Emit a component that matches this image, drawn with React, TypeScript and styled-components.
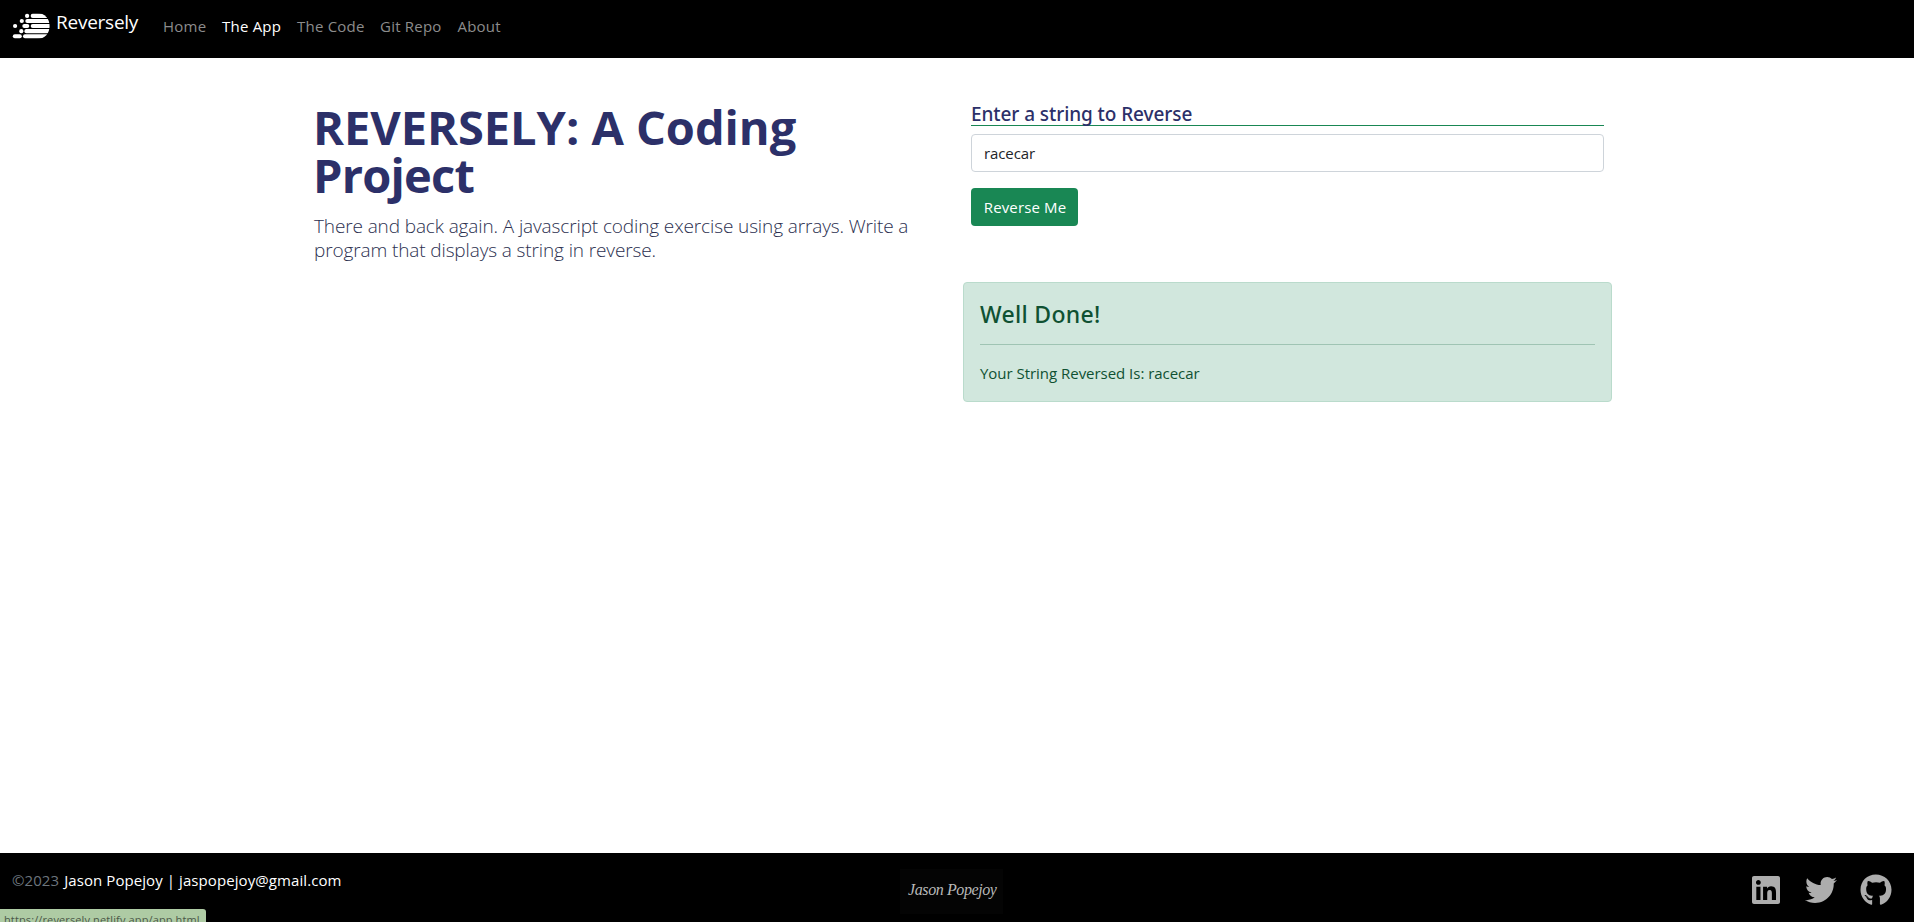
import React from "react";
import styled, { createGlobalStyle } from "styled-components";
import { FaGithub, FaLinkedin, FaTwitter } from "react-icons/fa";

const GlobalStyle = createGlobalStyle`
  *, *::before, *::after { box-sizing: border-box; }
  body {
    margin: 0;
    background: #fff;
    color: #212529;
    font-family: "Open Sans", "Noto Sans", sans-serif;
    font-size: 15px;
    line-height: 24px;
  }
  h1, h4, p, ul { margin: 0; padding: 0; }
`;

const Page = styled.div`
  display: flex;
  flex-direction: column;
  height: 922px;
  overflow: hidden;
  position: relative;
`;

const Navbar = styled.nav`
  display: flex;
  align-items: flex-start;
  height: 58px;
  padding-left: 12px;
  background: #000;
  flex: none;
`;

const Brand = styled.a`
  display: flex;
  gap: 6px;
  width: 151px;
  color: #fff;
  font-size: 19px;
  letter-spacing: -0.25px;
  line-height: 30px;
  padding-top: 8px;
`;

const LogoMark = styled.svg`
  width: 38px;
  height: 26px;
  margin-top: 5px;
  flex: none;
`;

const BrandName = styled.span`
  margin-top: -1px;
`;

const NavList = styled.ul`
  display: flex;
  list-style: none;
  padding-top: 14px;
`;

const NavItem = styled.li<{ $width: number; $active?: boolean }>`
  width: ${(p) => p.$width}px;
  color: ${(p) => (p.$active ? "#fff" : "#8c8c8c")};
  letter-spacing: 0.22px;
  white-space: nowrap;
`;

const Main = styled.main`
  flex: 1;
  display: grid;
  grid-template-columns: 649px 649px;
  align-content: start;
  justify-content: start;
  padding: 43px 0 0 314px;
`;

const Intro = styled.section`
  padding-top: 2px;
`;

const Title = styled.h1`
  color: #2c3069;
  font-size: 47px;
  font-weight: 700;
  line-height: 48px;
  margin-left: -1px;
`;

const TitleLine = styled.span<{ $spacing: number }>`
  display: block;
  letter-spacing: ${(p) => p.$spacing}px;
`;

const Lead = styled.p`
  width: 620px;
  margin-top: 15px;
  color: #2c3050;
  font-size: 19px;
  font-weight: 300;
  letter-spacing: -0.12px;
  line-height: 24px;
`;

const Form = styled.form`
  display: flex;
  flex-direction: column;
  align-items: flex-start;
  padding: 0 8px;
`;

const Label = styled.label`
  width: 100%;
  height: 25px;
  border-bottom: 1px solid #198754;
  color: #2c3069;
  font-family: "Noto Sans", sans-serif;
  font-size: 19px;
  font-weight: 500;
  letter-spacing: -0.08px;
  line-height: 26px;
`;

const TextInput = styled.input`
  width: 100%;
  height: 38px;
  margin: 8px 0 16px;
  padding: 6px 12px;
  border: 1px solid #ced4da;
  border-radius: 4px;
  background: #fff;
  color: #212529;
  font: inherit;
  letter-spacing: -0.1px;
  outline: none;
`;

const SubmitButton = styled.button`
  width: 107px;
  height: 38px;
  padding: 0 0 1px 1px;
  border: 0;
  border-radius: 4px;
  background: #198754;
  color: #fff;
  font: inherit;
  letter-spacing: 0.13px;
`;

const Alert = styled.div`
  height: 120px;
  margin-top: 56px;
  padding: 16px;
  border: 1px solid #badbcc;
  border-radius: 4px;
  background: #d1e7dd;
  color: #0f5132;
`;

const AlertHeading = styled.h4`
  font-family: "Noto Sans", sans-serif;
  font-size: 23px;
  font-weight: 500;
  letter-spacing: 0.3px;
  line-height: 30px;
`;

const Divider = styled.div`
  height: 1px;
  margin: 15px 0 16px;
  background: #9fc4b3;
`;

const AlertText = styled.p`
  letter-spacing: -0.03px;
`;

const Footer = styled.footer`
  display: grid;
  grid-template-columns: 1fr 102px 1fr;
  align-items: start;
  height: 69px;
  padding: 16px 22px 0 12px;
  background: #000;
  flex: none;
`;

const Copyright = styled.p`
  margin-top: -1px;
  color: #6c757d;
  letter-spacing: 0.08px;
`;

const Owner = styled.span`
  margin-left: 1px;
  color: #fff;
`;

const Signature = styled.div`
  height: 45px;
  margin-left: -1px;
  padding-left: 8px;
  background: #040404;
  color: #b8b8b8;
  font-family: "Liberation Serif", serif;
  font-size: 16px;
  font-style: italic;
  letter-spacing: -0.4px;
  line-height: 41px;
  white-space: nowrap;
`;

const Socials = styled.div`
  display: flex;
  justify-content: flex-end;
  gap: 23px;
  padding-top: 5px;
  color: #adadad;
  font-size: 32px;
`;

const StatusBar = styled.div`
  position: absolute;
  left: 0;
  bottom: 0;
  width: 206px;
  height: 13px;
  padding: 2px 0 0 4px;
  border-top-right-radius: 3px;
  background: #aecba4;
  color: #4b5848;
  font-size: 11px;
  letter-spacing: 0.12px;
  line-height: 17px;
  overflow: hidden;
  white-space: nowrap;
`;

/* Each entry is one rounded stripe of the mark: x, y, width. */
const stripes: [number, number, number][] = [
  [13, 0.8, 4.2], [18.7, 0.8, 22],
  [7.7, 5.9, 4.2], [13.3, 5.9, 28],
  [1, 11, 4.2], [10.3, 11, 7], [18.7, 11, 24],
  [7.2, 16.1, 4.2], [12.4, 16.1, 28],
  [0.8, 21.2, 9], [11, 21.2, 28],
];

const Logo = () => (
  <LogoMark viewBox="0 0 38 26">
    <clipPath id="mark">
      <path d="M0 0H25C33 0 37.6 6 37.6 13S33 26 25 26H0Z" />
    </clipPath>
    <g clipPath="url(#mark)" fill="#fff">
      {stripes.map(([x, y, w]) => (
        <rect key={`${x}-${y}`} x={x} y={y} width={w} height={4.1} rx={2} />
      ))}
    </g>
  </LogoMark>
);

const links = [
  { label: "Home", width: 59 },
  { label: "The App", width: 75, active: true },
  { label: "The Code", width: 83 },
  { label: "Git Repo", width: 77.5 },
  { label: "About", width: 60 },
];

export default function App() {
  return (
    <Page>
      <GlobalStyle />
      <Navbar>
        <Brand>
          <Logo />
          <BrandName>Reversely</BrandName>
        </Brand>
        <NavList>
          {links.map((l) => (
            <NavItem key={l.label} $width={l.width} $active={l.active}>
              {l.label}
            </NavItem>
          ))}
        </NavList>
      </Navbar>
      <Main>
        <Intro>
          <Title>
            <TitleLine $spacing={-0.05}>REVERSELY: A Coding</TitleLine>
            <TitleLine $spacing={-0.8}>Project</TitleLine>
          </Title>
          <Lead>
            There and back again. A javascript coding exercise using arrays. Write a
            program that displays a string in reverse.
          </Lead>
        </Intro>
        <section>
          <Form>
            <Label htmlFor="source">Enter a string to Reverse</Label>
            <TextInput id="source" defaultValue="racecar" />
            <SubmitButton type="button">Reverse Me</SubmitButton>
          </Form>
          <Alert>
            <AlertHeading>Well Done!</AlertHeading>
            <Divider />
            <AlertText>Your String Reversed Is: racecar</AlertText>
          </Alert>
        </section>
      </Main>
      <Footer>
        <Copyright>
          ©2023 <Owner>Jason Popejoy | jaspopejoy@gmail.com</Owner>
        </Copyright>
        <Signature>Jason Popejoy</Signature>
        <Socials>
          <FaLinkedin />
          <FaTwitter />
          <FaGithub />
        </Socials>
      </Footer>
      <StatusBar>https://reversely.netlify.app/app.html</StatusBar>
    </Page>
  );
}
